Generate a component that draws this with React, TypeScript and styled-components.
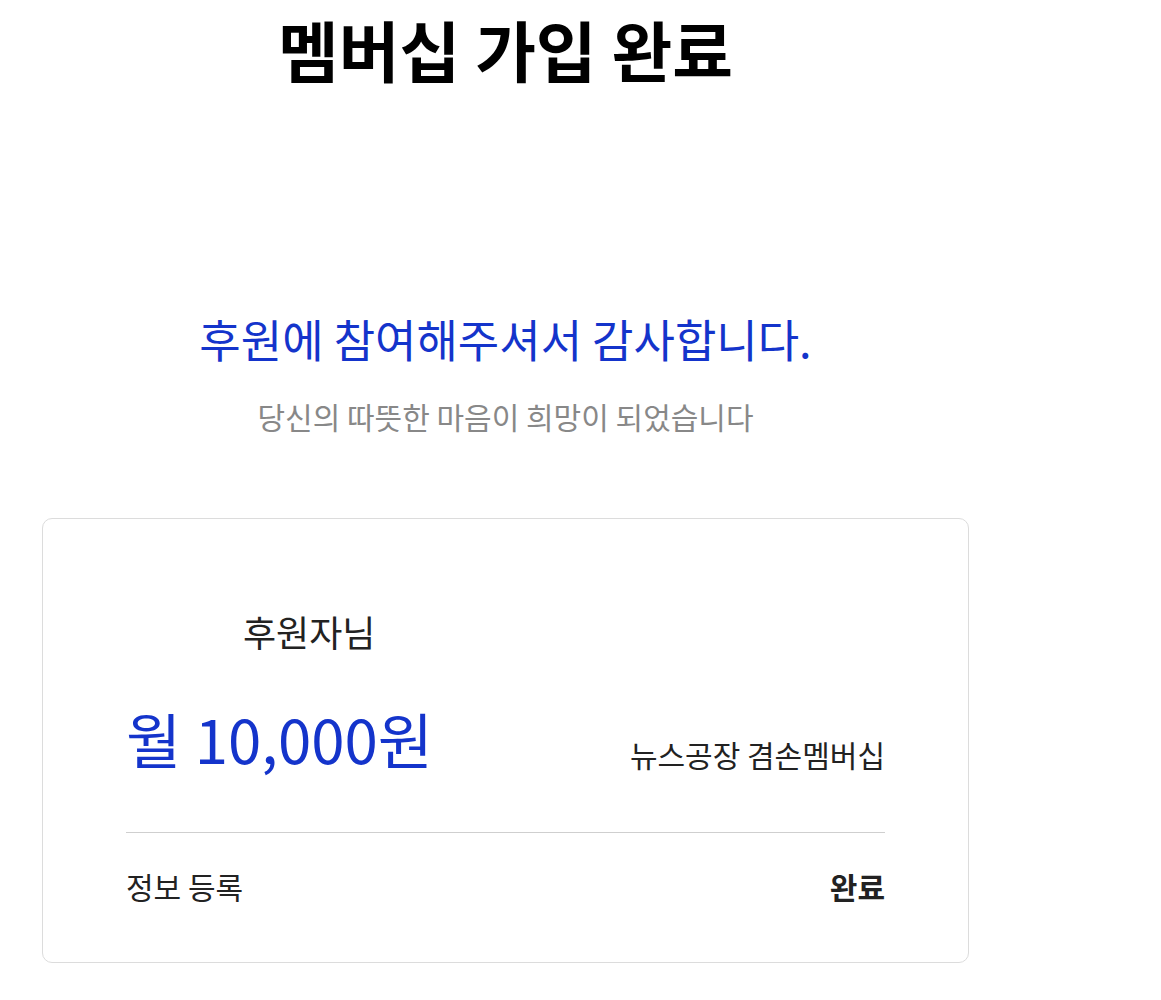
import styled, { createGlobalStyle } from "styled-components";

const GlobalStyle = createGlobalStyle`
  body {
    margin: 0;
    background: #ffffff;
    font-family: "Noto Sans CJK KR", "Noto Sans", sans-serif;
  }
`;

const Page = styled.div`
  width: 927px;
  margin-left: 42px;
  display: flex;
  flex-direction: column;
  align-items: center;
`;

const Title = styled.h1`
  margin: 0;
  font-size: 66px;
  font-weight: 700;
  line-height: 96px;
  color: #000;
`;

const Thanks = styled.h2`
  margin: 215px 0 0;
  font-size: 45px;
  font-weight: 400;
  line-height: 56px;
  color: #1434cb;
`;

const SubText = styled.p`
  margin: 29px 0 0;
  font-size: 30px;
  line-height: 40px;
  color: #888;
`;

const Card = styled.section`
  align-self: stretch;
  margin-top: 82px;
  border: 1px solid #dcdcdc;
  border-radius: 10px;
  padding: 87px 83px 56px;
`;

const Donor = styled.div`
  margin-left: 117px;
  font-size: 36px;
  line-height: 50px;
  color: #222;
`;

const AmountRow = styled.div`
  margin-top: 42px;
  display: flex;
  justify-content: space-between;
  align-items: flex-end;
  padding-bottom: 54px;
  border-bottom: 1px solid #cfcfcf;
`;

const Amount = styled.div`
  font-size: 60px;
  line-height: 80px;
  color: #1434cb;
`;

const Plan = styled.div`
  font-size: 30px;
  line-height: 48px;
  color: #222;
`;

const StatusRow = styled.div`
  margin-top: 33px;
  display: flex;
  justify-content: space-between;
  align-items: center;
  font-size: 30px;
  line-height: 40px;
  color: #222;
`;

const StatusValue = styled.span<{ $bold?: boolean }>`
  font-weight: ${(p) => (p.$bold ? 700 : 400)};
`;

export default function App() {
  return (
    <>
      <GlobalStyle />
      <Page>
        <Title>멤버십 가입 완료</Title>
        <Thanks>후원에 참여해주셔서 감사합니다.</Thanks>
        <SubText>당신의 따뜻한 마음이 희망이 되었습니다</SubText>
        <Card>
          <Donor>후원자님</Donor>
          <AmountRow>
            <Amount>월 10,000원</Amount>
            <Plan>뉴스공장 겸손멤버십</Plan>
          </AmountRow>
          <StatusRow>
            <StatusValue>정보 등록</StatusValue>
            <StatusValue $bold>완료</StatusValue>
          </StatusRow>
        </Card>
      </Page>
    </>
  );
}
